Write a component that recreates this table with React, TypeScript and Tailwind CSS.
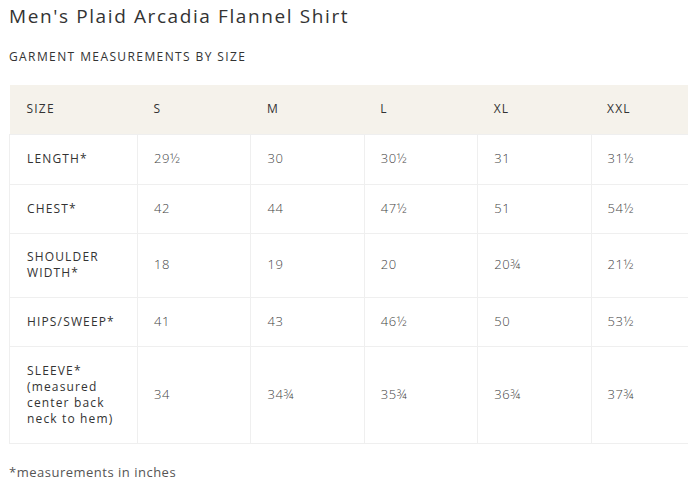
const sizes = ['S', 'M', 'L', 'XL', 'XXL'];

const rows: { label: string[]; values: string[] }[] = [
  { label: ['LENGTH*'], values: ['29½', '30', '30½', '31', '31½'] },
  { label: ['CHEST*'], values: ['42', '44', '47½', '51', '54½'] },
  { label: ['SHOULDER', 'WIDTH*'], values: ['18', '19', '20', '20¾', '21½'] },
  { label: ['HIPS/SWEEP*'], values: ['41', '43', '46½', '50', '53½'] },
  {
    label: ['SLEEVE*', '(measured', 'center back', 'neck to hem)'],
    values: ['34', '34¾', '35¾', '36¾', '37¾'],
  },
];

const heights = ['h-[50px]', 'h-[49px]', 'h-[64px]', 'h-[49px]', 'h-[97px]'];

export default function App() {
  return (
    <div
      className="w-[688px] h-[486px] overflow-hidden bg-white text-[#333]"
      style={{ fontFamily: '"Open Sans", "Noto Sans", sans-serif' }}
    >
      <div className="pl-[9px] pt-[4px]">
        <h1 className="text-[19px] leading-[24px] tracking-[1.6px] font-medium text-[#333]">
          Men's Plaid Arcadia Flannel Shirt
        </h1>
        <h2 className="mt-[21px] text-[12px] leading-[16px] tracking-[1.4px] font-medium text-[#333]">
          GARMENT MEASUREMENTS BY SIZE
        </h2>

        <table className="mt-[20px] border-collapse table-fixed w-[695px]">
          <colgroup>
            <col className="w-[128px]" />
            {sizes.map((s) => (
              <col key={s} className="w-[113.4px]" />
            ))}
          </colgroup>
          <thead>
            <tr className="bg-[#f5f2eb] h-[49px]">
              <th className="pl-[17px] text-left font-medium text-[12px] tracking-[1.2px] text-[#333]">
                SIZE
              </th>
              {sizes.map((s) => (
                <th
                  key={s}
                  className="pl-[16px] text-left font-medium text-[12px] tracking-[1.2px] text-[#333]"
                >
                  {s}
                </th>
              ))}
            </tr>
          </thead>
          <tbody>
            {rows.map((r, i) => (
              <tr key={i} className={heights[i]}>
                <td className="pl-[17px] border border-[#efefef] text-[12px] leading-[16px] tracking-[1.15px] font-medium text-[#333] align-middle">
                  {r.label.map((l, j) => (
                    <div key={j}>{l}</div>
                  ))}
                </td>
                {r.values.map((v, j) => (
                  <td
                    key={j}
                    className="pl-[16px] border border-[#efefef] text-[13px] tracking-[0.6px] font-light text-[#444] align-middle"
                  >
                    {v}
                  </td>
                ))}
              </tr>
            ))}
          </tbody>
        </table>

        <p className="mt-[20px] text-[13px] leading-[16px] tracking-[0.5px] text-[#555]">
          *measurements in inches
        </p>
      </div>
    </div>
  );
}
